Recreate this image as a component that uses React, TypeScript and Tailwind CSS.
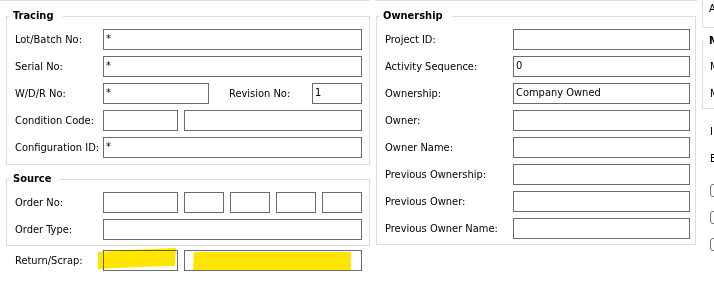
import type { ReactNode } from "react";

const font = { fontFamily: '"DejaVu Sans Condensed", "Liberation Sans", Arial, sans-serif' };

function Box({ value = "", w }: { value?: string; w: string }) {
  return (
    <input
      readOnly
      value={value}
      className={`box-border h-[21px] shrink-0 border border-[#6b6b6b] bg-white px-[2px] pb-[3px] text-[11px] leading-[14px] text-black outline-none ${w}`}
    />
  );
}

function Group({ title, className, children }: { title: string; className: string; children: ReactNode }) {
  return (
    <fieldset className={`border border-[#dcdcdc] ${className}`}>
      <legend className="ml-[2px] pl-[4px] pr-[9px] text-[11px] font-bold leading-[14px] text-black">{title}</legend>
      {children}
    </fieldset>
  );
}

function Row({ label, lw = "w-[88px]", children }: { label: string; lw?: string; children: ReactNode }) {
  return (
    <div className="flex h-[21px] items-center">
      <span className={`${lw} shrink-0 whitespace-nowrap`}>{label}</span>
      {children}
    </div>
  );
}

function Check() {
  return <span className="block h-[13px] w-[13px] rounded-[3px] border border-[#707070] bg-white" />;
}

export default function App() {
  return (
    <div style={font} className="flex h-[292px] w-[714px] overflow-hidden bg-white text-[11px] leading-[14px] text-black">
      {/* left column */}
      <div className="w-[375px] shrink-0">
        <div className="h-px w-[370px] bg-[#dcdcdc]" />
        <Group title="Tracing" className="ml-[6px] mt-[8px] w-[364px]">
          <div className="flex flex-col gap-[6px] pb-[6px] pl-[8px] pr-[7px] pt-[6px]">
            <Row label="Lot/Batch No:">
              <Box value="*" w="w-[259px]" />
            </Row>
            <Row label="Serial No:">
              <Box value="*" w="w-[259px]" />
            </Row>
            <Row label="W/D/R No:">
              <Box value="*" w="w-[106px]" />
              <span className="ml-[20px] w-[83px] shrink-0 whitespace-nowrap">Revision No:</span>
              <Box value="1" w="w-[50px]" />
            </Row>
            <Row label="Condition Code:">
              <div className="flex gap-[6px]">
                <Box w="w-[75px]" />
                <Box w="w-[178px]" />
              </div>
            </Row>
            <Row label="Configuration ID:">
              <Box value="*" w="w-[259px]" />
            </Row>
          </div>
        </Group>
        <Group title="Source" className="ml-[6px] mt-[7px] w-[364px]">
          <div className="flex flex-col gap-[6px] pb-[5px] pl-[8px] pr-[7px] pt-[6px]">
            <Row label="Order No:">
              <div className="flex gap-[6px]">
                <Box w="w-[75px]" />
                <Box w="w-[40px]" />
                <Box w="w-[40px]" />
                <Box w="w-[40px]" />
                <Box w="w-[40px]" />
              </div>
            </Row>
            <Row label="Order Type:">
              <Box w="w-[259px]" />
            </Row>
          </div>
        </Group>
        <div className="relative mt-[4px] pl-[15px]">
          <Row label="Return/Scrap:">
            <div className="flex gap-[6px]">
              <Box w="w-[75px]" />
              <Box w="w-[178px]" />
            </div>
          </Row>
          <svg className="pointer-events-none absolute left-[98px] top-[-2px] mix-blend-multiply" width="79" height="22" viewBox="0 0 79 22">
            <polygon points="0,4 30,2 78,0 77,18 40,19 0,21" fill="#ffe600" />
          </svg>
          <svg className="pointer-events-none absolute left-[193px] top-[2px] mix-blend-multiply" width="158" height="18" viewBox="0 0 158 18">
            <polygon points="1,0 158,0 158,18 0,18" fill="#ffe600" />
          </svg>
        </div>
      </div>

      {/* middle column */}
      <div className="w-[327px] shrink-0">
        <div className="h-px w-[322px] bg-[#dcdcdc]" />
        <Group title="Ownership" className="ml-[1px] mt-[8px] w-[320px]">
          <div className="flex flex-col gap-[6px] pb-[5px] pl-[8px] pr-[5px] pt-[6px]">
            <Row label="Project ID:" lw="w-[128px]">
              <Box w="w-[177px]" />
            </Row>
            <Row label="Activity Sequence:" lw="w-[128px]">
              <Box value="0" w="w-[177px]" />
            </Row>
            <Row label="Ownership:" lw="w-[128px]">
              <Box value="Company Owned" w="w-[177px]" />
            </Row>
            <Row label="Owner:" lw="w-[128px]">
              <Box w="w-[177px]" />
            </Row>
            <Row label="Owner Name:" lw="w-[128px]">
              <Box w="w-[177px]" />
            </Row>
            <Row label="Previous Ownership:" lw="w-[128px]">
              <Box w="w-[177px]" />
            </Row>
            <Row label="Previous Owner:" lw="w-[128px]">
              <Box w="w-[177px]" />
            </Row>
            <Row label="Previous Owner Name:" lw="w-[128px]">
              <Box w="w-[177px]" />
            </Row>
          </div>
        </Group>
      </div>

      {/* right column, clipped */}
      <div className="w-[120px] shrink-0">
        <div className="flex h-[28px] items-center border-b border-l border-[#dcdcdc] pb-[10px] pl-[6px]">A</div>
        <Group title="M" className="mt-[6px] w-[118px]">
          <div className="flex flex-col gap-[6px] pb-[4px] pl-[7px] pt-[8px]">
            <div className="flex h-[21px] items-center">M</div>
            <div className="flex h-[21px] items-center">M</div>
          </div>
        </Group>
        <div className="flex flex-col gap-[6px] pl-[8px] pt-[12px]">
          <div className="flex h-[21px] items-center">I</div>
          <div className="flex h-[21px] items-center">E</div>
          <div className="mt-[5px] flex h-[21px] items-center">
            <Check />
          </div>
          <div className="flex h-[21px] items-center">
            <Check />
          </div>
          <div className="flex h-[21px] items-center">
            <Check />
          </div>
        </div>
      </div>
    </div>
  );
}
